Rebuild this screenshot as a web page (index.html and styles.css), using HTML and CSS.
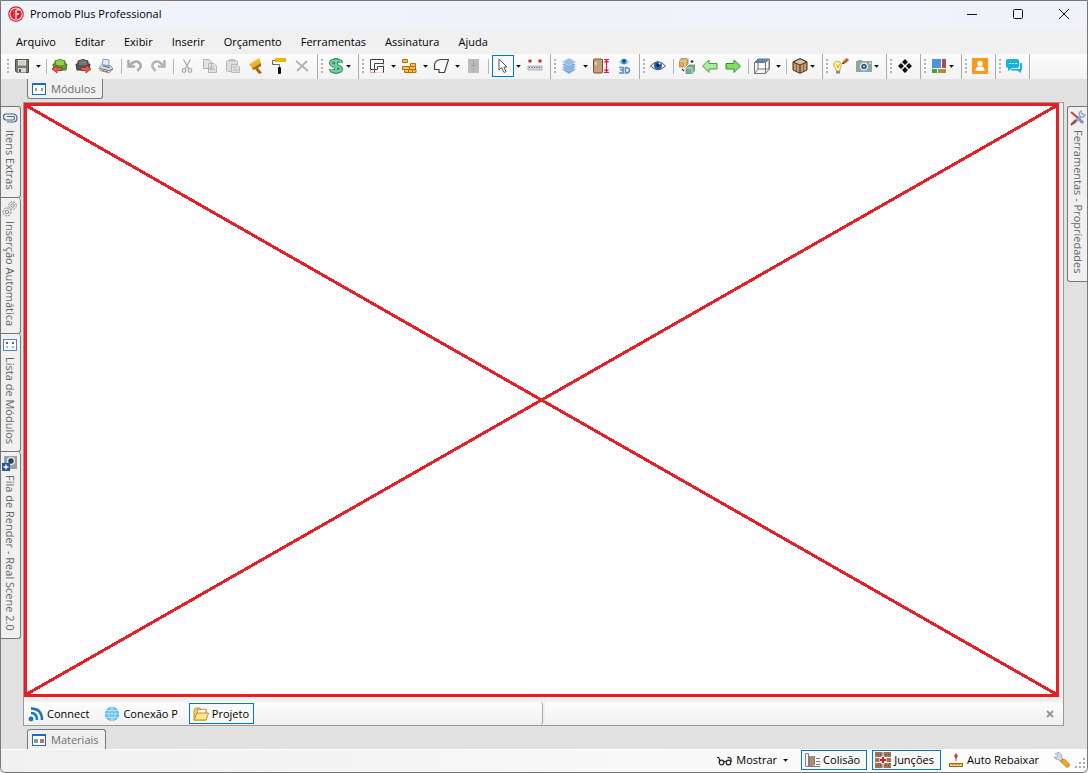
FILE: index.html
```html
<!DOCTYPE html>
<html lang="pt-BR">
<head>
<meta charset="utf-8">
<title>Promob Plus Professional</title>
<link rel="stylesheet" href="styles.css">
</head>
<body>
<div class="window">
<header class="titlebar">
<svg class="logo" viewBox="0 0 16 16"><circle cx="8" cy="8" r="7.200" fill="#fbe9ea" stroke="#d3202b" stroke-width="1.200"/><circle cx="8" cy="8" r="5.600" fill="#dc1f2c"/><path d="M8 13V4.500Q9 3.500 11.500 4M8 8H11" fill="none" stroke="#fbe9ea" stroke-width="1.300"/><path d="M5.500 4V11" stroke="#e04a54"/></svg>
<h1 class="title">Promob Plus Professional</h1>
<div class="window-buttons">
<button aria-label="Minimizar"><svg viewBox="0 0 12 12"><path d="M1 6.500H11"/></svg></button>
<button aria-label="Maximizar"><svg viewBox="0 0 12 12"><rect x="1.500" y="1.500" width="9" height="9" rx="1"/></svg></button>
<button aria-label="Fechar"><svg viewBox="0 0 12 12"><path d="M1 1L11 11M11 1L1 11"/></svg></button>
</div>
</header>
<nav class="menubar">
<button>Arquivo</button><button>Editar</button><button>Exibir</button><button>Inserir</button><button>Orçamento</button><button>Ferramentas</button><button>Assinatura</button><button>Ajuda</button>
</nav>
<div class="toolbar">
<div class="group">
<i class="grip"></i>
<button class="tool split" aria-label="Salvar"><svg viewBox="0 0 16 16"><path d="M1.500 1.500H14.500V14.500H3L1.500 13Z" fill="#77776e" stroke="#4c4c47"/><rect x="4" y="2" width="8" height="5.500" fill="#e4e8df"/><path d="M5 4H11M5 6H11" stroke="#aeb7aa"/><rect x="4" y="10" width="8" height="4.500" fill="#d8d8d2"/><rect x="5" y="11" width="2" height="3" fill="#55554d"/></svg><i class="arrow"></i></button>
<i class="sep"></i>
<button class="tool" aria-label="Inserir módulo"><svg viewBox="0 0 16 16"><path d="M3 6V3Q8 0 13 3V6L15 6L14 12H2L1 6Z" fill="#57a62b" stroke="#3c7a1c"/><path d="M4 3Q8 1 12 3V7H4Z" fill="#8bd04e"/><path d="M0 11L5 7V9.500H10V12.500H5V15Z" fill="#e85c50" stroke="#8e261e" stroke-width=".7"/></svg></button>
<button class="tool" aria-label="Exportar módulo"><svg viewBox="0 0 16 16"><path d="M3 6V3Q8 0 13 3V6L15 6L14 12H2L1 6Z" fill="#555" stroke="#3a3a3a"/><path d="M4 3Q8 1 12 3V7H4Z" fill="#777"/><path d="M16 11L11 7V9.500H6V12.500H11V15Z" fill="#e85c50" stroke="#8e261e" stroke-width=".7"/></svg></button>
<button class="tool" aria-label="Imprimir"><svg viewBox="0 0 16 16"><path d="M4 7L5 1L11 2L11 8Z" fill="#dcecfb" stroke="#6c8db0" stroke-width=".8"/><path d="M1 10L4 6.500L13 8L15 11L11 15L2 12.500Z" fill="#ddd" stroke="#888" stroke-width=".8"/><path d="M2 10.500L11 12.500L15 11M4 12.500L10 14" fill="none" stroke="#777"/><path d="M5 8L12 9.500" stroke="#4f8cc4" stroke-width="1.500"/></svg></button>
<i class="sep"></i>
<button class="tool" aria-label="Desfazer"><svg viewBox="0 0 16 16"><path d="M1.500 2V8.500H8" fill="none" stroke="#a9a9a9" stroke-width="2.500"/><path d="M2.500 8Q6 3 10 3.500Q14.500 5 13.500 9L10.500 13" fill="none" stroke="#a9a9a9" stroke-width="2.500"/></svg></button>
<button class="tool" aria-label="Refazer"><svg viewBox="0 0 16 16"><path d="M14.500 2V8.500H8" fill="none" stroke="#b4b4b4" stroke-width="2.500"/><path d="M13.500 8Q10 3 6 3.500Q1.500 5 2.500 9L5.500 13" fill="none" stroke="#b4b4b4" stroke-width="2.500"/></svg></button>
<i class="sep"></i>
<button class="tool" aria-label="Recortar"><svg viewBox="0 0 16 16" fill="none" stroke="#aaa" stroke-width="1.300"><path d="M4.500 1.500L10 11M11.500 1.500L6 11"/><circle cx="5" cy="12.500" r="1.800"/><circle cx="11" cy="12.500" r="1.800"/></svg></button>
<button class="tool" aria-label="Copiar"><svg viewBox="0 0 16 16" fill="#e2e2e2" stroke="#b4b4b4"><path d="M1.500 1.500H7L9.500 4V10.500H1.500ZM6.500 5.500H12L14.500 8V14.500H6.500Z"/><path d="M8 9H12M8 11.500H13"/></svg></button>
<button class="tool" aria-label="Colar"><svg viewBox="0 0 16 16" fill="#dedede" stroke="#b8b8b8"><rect x="1.500" y="2.500" width="11" height="11" rx="1"/><path d="M4.500 3V1.500H9.500V3ZM6.500 6.500H12L14.500 9V14.500H6.500Z"/><path d="M8 9H12M8 12H13"/></svg></button>
<button class="tool" aria-label="Pincel"><svg viewBox="0 0 16 16"><path d="M1 6L11 0L13 5L4 10Z" fill="#efb321"/><path d="M4 10L13 5L13 8L10 10L14 15L11 16L7 11L5 12Z" fill="#a06a18"/><path d="M2 6L11 1" stroke="#ffd65b"/></svg></button>
<button class="tool" aria-label="Rolo"><svg viewBox="0 0 16 16"><path d="M4 2.500H1.500V6.500H8.500V9" fill="none" stroke="#666"/><rect x="4" y="0" width="11" height="4" fill="#f2b200"/><rect x="7" y="9" width="3" height="7" rx="1" fill="#111"/></svg></button>
<button class="tool" aria-label="Excluir"><svg viewBox="0 0 16 16" fill="none" stroke="#b0b0b0" stroke-width="1.800"><path d="M2 3L14 13M13 3L3 13"/></svg></button>
</div>
<div class="group">
<i class="grip"></i>
<button class="tool drop" aria-label="Orçamento"><svg viewBox="0 0 16 16"><path d="M13 5Q13 2.500 8 2.500T3 5Q3 7 8 8T13 11Q13 13.500 8 13.500T3 11M8 0V16" fill="none" stroke="#268d5b" stroke-width="4"/><path d="M13 5Q13 2.500 8 2.500T3 5Q3 7 8 8T13 11Q13 13.500 8 13.500T3 11M8 1V15" fill="none" stroke="#79cda0" stroke-width="2.200"/></svg><i class="arrow"></i></button>
</div>
<div class="group">
<i class="grip"></i>
<button class="tool split" aria-label="Paredes"><svg viewBox="0 0 16 16" fill="none"><rect x="1.500" y="1.500" width="13" height="13" stroke="#f1a0a0"/><path d="M1.500 11.500V1.500H14.500V5.500H5.500V11.500Z" fill="#fff" stroke="#444"/><path d="M5.500 14.500V11.500H8.500V8.500H14.500V14.500" fill="#fff" stroke="#444"/></svg><i class="arrow"></i></button>
<button class="tool split" aria-label="Alvenaria"><svg viewBox="0 0 16 16" fill="#f6bd5d" stroke="#b16f08"><path d="M1.500 1.500H6.500V4.500H1.500ZM1.500 8.500H8.500V11.500H1.500ZM8.500 8.500H14.500V11.500H8.500ZM3.500 11.500H7.500V14.500H3.500ZM7.500 11.500H11.500V14.500H7.500ZM11.500 11.500H15V14.500H11.500ZM9.500 5.500H14.500V8.500H9.500Z"/></svg><i class="arrow"></i></button>
<button class="tool split" aria-label="Polígono"><svg viewBox="0 0 16 16"><path d="M1.500 7Q2 2 8 1.500H15.500L11.500 14.500H6V11.500H1.500Z" fill="#f7f7f7" stroke="#444" stroke-width="1.200"/></svg><i class="arrow"></i></button>
<button class="tool" aria-label="Portas"><svg viewBox="0 0 16 16"><rect x="3" y="1" width="11" height="14" fill="#bcbcbc"/><path d="M8.500 2V14" stroke="#a5a5a5"/><path d="M6 7.500H8M9 7.500H11" stroke="#999"/></svg></button>
<i class="sep"></i>
<button class="tool split picked" aria-label="Selecionar"><span class="frame"><svg viewBox="0 0 16 16"><path d="M4 1V12L6.500 9.500L9 14.500L11 13.500L8.800 9H12Z" fill="#fff" stroke="#555"/></svg></span><i class="arrow"></i></button>
<button class="tool" aria-label="Medir"><svg viewBox="0 0 16 16"><circle cx="3" cy="3" r="1.800" fill="#c33"/><circle cx="13" cy="3" r="1.800" fill="#c33"/><rect x="1" y="8" width="14" height="4" fill="#d5d8e0" stroke="#a2a6b0" stroke-width=".8"/><path d="M2 9.500H14" stroke="#555" stroke-dasharray="1 1.500"/></svg></button>
</div>
<div class="group">
<i class="grip"></i>
<button class="tool split" aria-label="Camadas"><svg viewBox="0 0 16 16" fill="#76a5d2" stroke="#d5e6f5" stroke-width=".6"><path d="M8 8L15 11.500L8 16L1 11.500Z"/><path d="M8 5.500L15 9L8 13L1 9Z"/><path d="M8 3L15 6.500L8 10.500L1 6.500Z"/><path d="M8 0L15 4L8 8L1 4Z" fill="#99bfe2"/></svg><i class="arrow"></i></button>
<button class="tool" aria-label="Altura"><svg viewBox="0 0 16 16"><rect x=".5" y="1" width="9" height="14" rx="1" fill="#c7a079" stroke="#765235"/><path d="M3 4V7" stroke="#fff"/><path d="M11 1.500H16M11 14.500H16M13.500 2V14M11.500 4.500L13.500 2.500L15.500 4.500M11.500 11.500L13.500 13.500L15.500 11.500" fill="none" stroke="#d81b58" stroke-width="1.200"/></svg></button>
<button class="tool" aria-label="Ver 3D"><svg viewBox="0 0 16 16"><path d="M2 4Q8-3 14 4Q8 10 2 4Z" fill="#bde2f2"/><circle cx="8" cy="3.500" r="2.800" fill="#3985b4"/><circle cx="8" cy="3" r="1.200" fill="#173b5c"/><path d="M3 9.500H7V15H3M4 12H7M9.500 9.500V15Q13.500 15 13.500 12.200Q13.500 9.500 9.500 9.500Z" fill="none" stroke="#5b90ba" stroke-width="1.700"/></svg></button>
</div>
<div class="group">
<i class="grip"></i>
<button class="tool" aria-label="Visualizar"><svg viewBox="0 0 16 16"><path d="M.5 8Q8-.5 15.500 8Q8 15.500.5 8Z" fill="#eef3fa" stroke="#555"/><circle cx="8" cy="7.500" r="4" fill="#2b60af"/><circle cx="8" cy="7" r="1.800" fill="#091f4b"/><circle cx="9.500" cy="5.500" r="1" fill="#fff"/></svg></button>
<i class="sep"></i>
<button class="tool" aria-label="Substituir"><svg viewBox="0 0 16 16"><path d="M0 3L3 0H9V6L6 9H0Z" fill="#d9a860" stroke="#936531" stroke-width=".6"/><path d="M0 3H6V9M6 3L9 0" fill="none" stroke="#f3d59d"/><path d="M7 10L10 7H16V12L13 16H7Z" fill="#79ad94" stroke="#477f66" stroke-width=".6"/><path d="M7 10H13V16" fill="none" stroke="#bee0cd"/><path d="M13 2V5M11.500 3.500H14.500M3 11L5 13" stroke="#333" stroke-width="1.200"/></svg></button>
<button class="tool" aria-label="Anterior"><svg viewBox="0 0 16 16"><path d="M.5 8L7 2V5.500H15V11H7V14.500Z" fill="#b4e8a0" stroke="#43a43b"/></svg></button>
<button class="tool" aria-label="Próximo"><svg viewBox="0 0 16 16"><path d="M15.500 8L9 2V5.500H1V11H9V14.500Z" fill="#85dc62" stroke="#30952b"/></svg></button>
<i class="sep"></i>
<button class="tool split" aria-label="Vista"><svg viewBox="0 0 16 16" fill="none" stroke="#757575"><path d="M1 4L4 1H15L12 4Z" fill="#3d94df"/><path d="M.5 4.500H11.500V15.500H.5ZM4 4V11H15V1M11.500 15.500L15.500 11V1M.5 15.500L4 11"/></svg><i class="arrow"></i></button>
<i class="sep"></i>
<button class="tool drop" aria-label="Cubo"><svg viewBox="0 0 16 16" stroke="#3c2d20"><path d="M1 4L8 .7L15 4V12L8 15.300L1 12Z" fill="#c39a6b"/><path d="M1 4L8 7L15 4L8 .7Z" fill="#e0c49b"/><path d="M8 7V15"/><path d="M4.500 6V13M11.500 6V13" stroke="#8a6844"/></svg><i class="arrow"></i></button>
</div>
<div class="group">
<i class="grip"></i>
<button class="tool" aria-label="Iluminação"><svg viewBox="0 0 16 16"><path d="M3 11Q-.5 8 1 5Q3 2 7 4Q10 7 7 11V13H3Z" fill="#fff2ad" stroke="#d5aa35"/><path d="M3.500 6L5 10L6.500 6" fill="none" stroke="#d5aa35"/><path d="M3 13H7V15.500H3Z" fill="#888"/><path d="M9 6L11 2L14 0L16 2L13 5Z" fill="#c86519"/><path d="M9 6L10 4L11.500 5.500Z" fill="#222"/></svg></button>
<button class="tool drop" aria-label="Câmera"><svg viewBox="0 0 16 16"><path d="M0 3H2V2H6V3H16V14H0Z" fill="#92a3a5"/><circle cx="8" cy="8.500" r="4" fill="#e9f0f3"/><circle cx="8" cy="8.500" r="2.800" fill="#2e618e"/><circle cx="8" cy="8.500" r="1" fill="#bcd8ec"/><path d="M13 5H15" stroke="#fff"/></svg><i class="arrow"></i></button>
</div>
<div class="group">
<i class="grip"></i>
<button class="tool" aria-label="Mover"><svg viewBox="0 0 16 16"><path d="M8 1L11 4L8 7L5 4ZM8 9L11 12L8 15L5 12ZM4 5L7 8L4 11L1 8ZM12 5L15 8L12 11L9 8Z" fill="#111"/></svg></button>
</div>
<div class="group">
<i class="grip"></i>
<button class="tool drop" aria-label="Layout"><svg viewBox="0 0 16 16"><path d="M1 1H10V10H1Z" fill="#4c95d8"/><path d="M11 1H15V10H11Z" fill="#b74b50"/><path d="M1 11H6V15H1Z" fill="#3aa936"/><path d="M7 11H15V15H7Z" fill="#b28b40"/></svg><i class="arrow"></i></button>
</div>
<div class="group">
<i class="grip"></i>
<button class="tool" aria-label="Usuário"><svg viewBox="0 0 16 16"><rect width="16" height="16" fill="#f8981d"/><circle cx="8" cy="5.500" r="2.700" fill="#fff"/><path d="M3.500 13Q3.500 8.500 6.500 8.500H9.500Q12.500 8.500 12.500 13Z" fill="#fff"/></svg></button>
</div>
<div class="group">
<i class="grip"></i>
<button class="tool" aria-label="Chat"><svg viewBox="0 0 16 16" fill="#13b5d8"><path d="M14 5H16V12H15V15L11 12.500H5V11H14Z"/><rect y="1" width="13" height="9" rx="2"/><path d="M2 9V13L6 10Z"/><path d="M3 5H5V6H3ZM6 5H8V6H6ZM9 5H11V6H9Z" fill="#fff"/></svg></button>
</div>
</div>
<div class="workspace">
<aside class="side left">
<button class="side-tab"><svg viewBox="0 0 16 16" fill="none" stroke="#47698b" stroke-width="1.200"><path d="M5 12H11Q15 12 15 8T11 4H4Q1.500 4 1.500 7T4 10H11Q12.500 10 12.500 8T11 6.500H5"/></svg><span>Itens Extras</span></button>
<button class="side-tab"><svg viewBox="0 0 16 16" fill="none" stroke="#858585"><circle cx="10.500" cy="4.500" r="3.800" stroke-dasharray="2 1"/><circle cx="10.500" cy="4.500" r="1.700"/><circle cx="5" cy="11" r="4" stroke-dasharray="2 1"/><circle cx="5" cy="11" r="1.800"/></svg><span>Inserção Automática</span></button>
<button class="side-tab"><svg viewBox="0 0 16 16"><rect x="1.500" y="2.500" width="13" height="11" fill="#f9fcff" stroke="#5686c5"/><path d="M4 5H6V7H4ZM10 5H12V7H10Z" fill="#756345"/><path d="M4 9H6V11H4ZM10 9H12V11H10Z" fill="#8fb8e4"/></svg><span>Lista de Módulos</span></button>
<button class="side-tab"><svg viewBox="0 0 16 16"><rect x="2" y="1" width="13" height="13" fill="#92a3a5"/><circle cx="9" cy="6" r="4" fill="#e9f0f3"/><circle cx="9" cy="6" r="2.700" fill="#293e4e"/><rect y="8" width="8" height="8" fill="#24579a"/><path d="M4 9.500V14.500M1.500 12H6.500" stroke="#fff" stroke-width="1.300"/></svg><span>Fila de Render - Real Scene 2.0</span></button>
</aside>
<main class="center">
<button class="dock-tab top"><svg viewBox="0 0 16 16"><rect x="1.500" y="2.500" width="13" height="11" fill="#fff" stroke="#176dc3"/><path d="M1 2H15V4H1Z" fill="#176dc3"/><path d="M4 7H6V10H4ZM10 7H12V10H10Z" fill="#ab9370"/></svg>Módulos</button>
<section class="document">
<div class="viewport"><svg viewBox="0 0 100 100" preserveAspectRatio="none"><path d="M0 0L100 100M100 0L0 100"/></svg></div>
<div class="doc-tabs">
<div class="strip">
<button class="doc-tab"><svg viewBox="0 0 16 16" fill="none" stroke="#1b75bc" stroke-width="2.500"><circle cx="3" cy="13" r="1.200" fill="#1b75bc"/><path d="M3 7Q9 7 9 14M3 2.500Q14 2.500 14 14"/></svg>Connect</button>
<button class="doc-tab"><svg viewBox="0 0 16 16"><circle cx="8" cy="8" r="7.200" fill="#5bbce4"/><path d="M1 8H15M2 4.500H14M2 11.500H14M8 1V15M8 1Q1 8 8 15M8 1Q15 8 8 15" fill="none" stroke="#d2effa" stroke-width=".7"/></svg>Conexão P</button>
<button class="doc-tab active"><svg viewBox="0 0 16 16" stroke="#a98220" stroke-width=".8"><path d="M1 14V4L3 2H7L8 4H13V14Z" fill="#eed36a"/><path d="M4 4L13 3V10L5 12Z" fill="#fff"/><path d="M1 14L4 7H15.500L13 14Z" fill="#ffe58b"/></svg>Projeto</button>
</div>
<div class="strip end"><button class="close" aria-label="Fechar painel"><svg viewBox="0 0 8 8"><path d="M1 1L7 7M7 1L1 7" stroke="#999" stroke-width="2"/></svg></button></div>
</div>
</section>
<button class="dock-tab bottom"><svg viewBox="0 0 16 16"><rect x="1.500" y="2.500" width="13" height="11" fill="#fff" stroke="#176dc3"/><path d="M1 2H15V4H1Z" fill="#176dc3"/><path d="M3 7H7V11H3Z" fill="#72a989"/><path d="M9 7H13V11H9Z" fill="#d46870"/></svg>Materiais</button>
</main>
<aside class="side right">
<button class="side-tab"><svg viewBox="0 0 16 16" fill="none"><path d="M3 13L10 6Q8 3 11 1L12 4L15 5Q13 8 11 7L4 14" stroke="#99a8bd" stroke-width="1.500"/><path d="M1 2L8 8" stroke="#c93e3e" stroke-width="2"/><path d="M9 9L13 13" stroke="#7e97bb" stroke-width="3"/><path d="M1 15L6 10" stroke="#a33" stroke-width="2"/></svg><span>Ferramentas - Propriedades</span></button>
</aside>
</div>
<footer class="status">
<button class="status-item"><svg viewBox="0 0 16 16" fill="none" stroke="#222" stroke-width="1.200"><circle cx="4.500" cy="10.500" r="2.300"/><circle cx="11.500" cy="10.500" r="2.300"/><path d="M7 10Q8 8.500 9 10M2.500 9.500Q3 5 0 5.500M14 10Q15 5 10.500 5.500"/></svg>Mostrar<i class="arrow"></i></button>
<button class="status-item active"><svg viewBox="0 0 16 16"><path d="M1.500 1.500H4.500V14.500H1.500Z" fill="#fff" stroke="#788189"/><path d="M5 4H11V13L5 15Z" fill="#97745b"/><path d="M7 4V14M9 4V13" stroke="#bea28c"/><path d="M12 6.500H16M12 9.500H16M12 12.500H16M4 14.500H16" stroke="#777"/></svg>Colisão</button>
<button class="status-item active"><svg viewBox="0 0 16 16"><path d="M0 0H7.500V5H0ZM8.500 0H16V5H8.500ZM0 6H7.500V10H0ZM8.500 6H16V10H8.500ZM0 11H7.500V16H0ZM8.500 11H16V16H8.500Z" fill="#9a735b"/><path d="M2 2.500H6M10 2.500H14M2 13.500H6M10 13.500H14" stroke="#59402f" stroke-dasharray="1 2"/><path d="M8 4.500V11.500M4.500 8H11.500" stroke="#fff" stroke-width="4"/><path d="M8 5V11M5 8H11" stroke="#e01919" stroke-width="2"/></svg>Junções</button>
<button class="status-item auto"><svg viewBox="0 0 16 16"><path d="M8 1L10 4L8 7L6 4Z" fill="#d83e3b"/><path d="M8 6V9" stroke="#d83e3b"/><rect x="1.500" y="11.500" width="13" height="3" fill="#f0cc6c" stroke="#a06b1b"/><path d="M5 12V13M8 12V13M11 12V13" stroke="#a06b1b"/></svg>Auto Rebaixar</button>
<button class="status-item wrench" aria-label="Configurações"><svg viewBox="0 0 16 16"><path d="M1 2L4 0Q8 1 8 6L11 9L8 11L5 8Q1 8 0 5L3 5L4 3Z" fill="#d4dae1" stroke="#8e9aa8" stroke-width=".7"/><path d="M7 8L10 7L15.500 12Q16 15 13 15.500L7 10Z" fill="#f5a623" stroke="#b47615" stroke-width=".7"/></svg></button>
<svg class="resizer" viewBox="0 0 12 12" fill="#aaa"><path d="M8 0H10V2H8ZM4 4H6V6H4ZM8 4H10V6H8ZM0 8H2V10H0ZM4 8H6V10H4ZM8 8H10V10H8Z"/></svg>
</footer>
</div>
</body>
</html>
```
FILE: styles.css
```css
* { box-sizing: border-box; }
body { margin: 0; background: #e1e1e1; font: 11px/16px "Open Sans", "Noto Sans", sans-serif; color: #000; }
button { margin: 0; padding: 0; border: 0; background: none; font: inherit; color: inherit; white-space: nowrap; }
svg { display: block; width: 16px; height: 16px; flex: none; }
.window { display: flex; flex-direction: column; height: 100vh; border: 1px solid #777; border-radius: 0 0 6px 6px; background: #e1e1e1; overflow: hidden; }

.titlebar { display: flex; align-items: center; height: 29px; flex: none; padding: 0 0 3px 7px; background: linear-gradient(90deg, #eff3fa, #f1f1fa); }
.title { flex: 1; margin: 0 0 0 6px; font-size: 11px; font-weight: 400; }
.window-buttons { display: flex; }
.window-buttons button { display: grid; place-items: center; width: 46px; height: 26px; }
.window-buttons svg { width: 12px; height: 12px; fill: none; stroke: #111; }

.menubar { display: flex; flex: none; gap: 1px; height: 24px; padding-left: 6px; background: #f0f0f0; }
.menubar button { padding: 0 9px; }

.toolbar { display: flex; flex: none; height: 25px; padding-left: 3px; background: linear-gradient(#fdfdfd, #f2f2f2); }
.group { display: flex; align-items: center; padding: 0 3px 1px 0; border-right: 1px solid #aaa; }
.grip { width: 2px; height: 14px; margin: 0 2px 0 3px; background: repeating-linear-gradient(#b5b5b5 0 2px, transparent 2px 4px); }
.sep { width: 1px; height: 15px; margin: 0 2px 0 3px; background: #b5b5b5; }
.tool { display: flex; align-items: center; height: 24px; padding: 0 4px 0 3px; }
.split { gap: 6px; padding-right: 2px; }
.drop { gap: 2px; }
.arrow { width: 5px; height: 3px; background: #000; clip-path: polygon(0 0, 5px 0, 5px 1px, 4px 1px, 4px 2px, 3px 2px, 3px 3px, 2px 3px, 2px 2px, 1px 2px, 1px 1px, 0 1px); }
.picked { padding: 0 3px 0 1px; gap: 2px; }
.frame { padding: 2px; border: 1px solid #0078d7; background: #f8f8f8; }

.workspace { flex: 1; min-height: 0; display: flex; }
.side { flex: none; padding-top: 27px; color: #666; }
.left { width: 22px; }
.right { width: 23px; padding-left: 3px; }
.side-tab { display: flex; align-items: center; gap: 4px; width: 20px; padding: 3px 0 7px; border: 1px solid #777; background: #f0f0f0; writing-mode: vertical-rl; }
.left .side-tab { border-left: 0; border-radius: 0 3px 3px 0; padding-right: 2px; }
.side-tab + .side-tab { border-top: 0; }
.right .side-tab { border-right: 0; border-radius: 3px 0 0 3px; }
.center { display: flex; flex-direction: column; align-items: flex-start; flex: 1; min-width: 0; }
.dock-tab { display: flex; align-items: center; gap: 4px; height: 20px; margin-left: 4px; padding: 0 6px 0 3px; border: 1px solid #777; background: #f0f0f0; color: #6d6d6d; }
.top { border-top: 0; border-radius: 0 0 3px 3px; }
.bottom { border-bottom: 0; border-radius: 3px 3px 0 0; }
.document { display: flex; flex-direction: column; align-self: stretch; flex: 1; min-height: 0; margin: 3px 0; border: 1px solid #999; background: #f0f0f0; }
.viewport { flex: 1; min-height: 0; margin-right: 4px; border: 3px solid #ed1c24; background: #fff; }
.viewport svg { width: 100%; height: 100%; }
.viewport path { stroke: #ed1c24; stroke-width: 3px; vector-effect: non-scaling-stroke; shape-rendering: crispEdges; }
.doc-tabs { display: flex; height: 28px; padding-top: 5px; }
.strip { display: flex; align-items: center; flex: 1; gap: 6px; border-right: 1px solid #aaa; border-radius: 3px; background: linear-gradient(#fdfdfd, #f0f0f0); }
.doc-tab { display: flex; align-items: center; gap: 3px; height: 21px; padding: 0 4px 0 3px; border: 1px solid transparent; }
.end { justify-content: flex-end; border-right: 0; margin-left: 2px; }
.close { margin-right: 9px; }
.close svg { width: 8px; height: 8px; }

.status { display: flex; align-items: center; justify-content: flex-end; flex: none; height: 23px; padding-bottom: 2px; border-top: 1px solid #fff; background: linear-gradient(90deg, #f0f0f0, #fdfdfd); }
.status-item { display: flex; align-items: center; gap: 3px; height: 20px; margin-right: 5px; padding: 0 6px 0 2px; }
.status-item .arrow { margin: 0 2px 0 3px; }
.auto { margin-right: 9px; }
.wrench { padding: 0; }
.resizer { width: 12px; height: 12px; align-self: flex-end; }
.active { border: 1px solid #0078d7; background: #f8f8f8; }
```
